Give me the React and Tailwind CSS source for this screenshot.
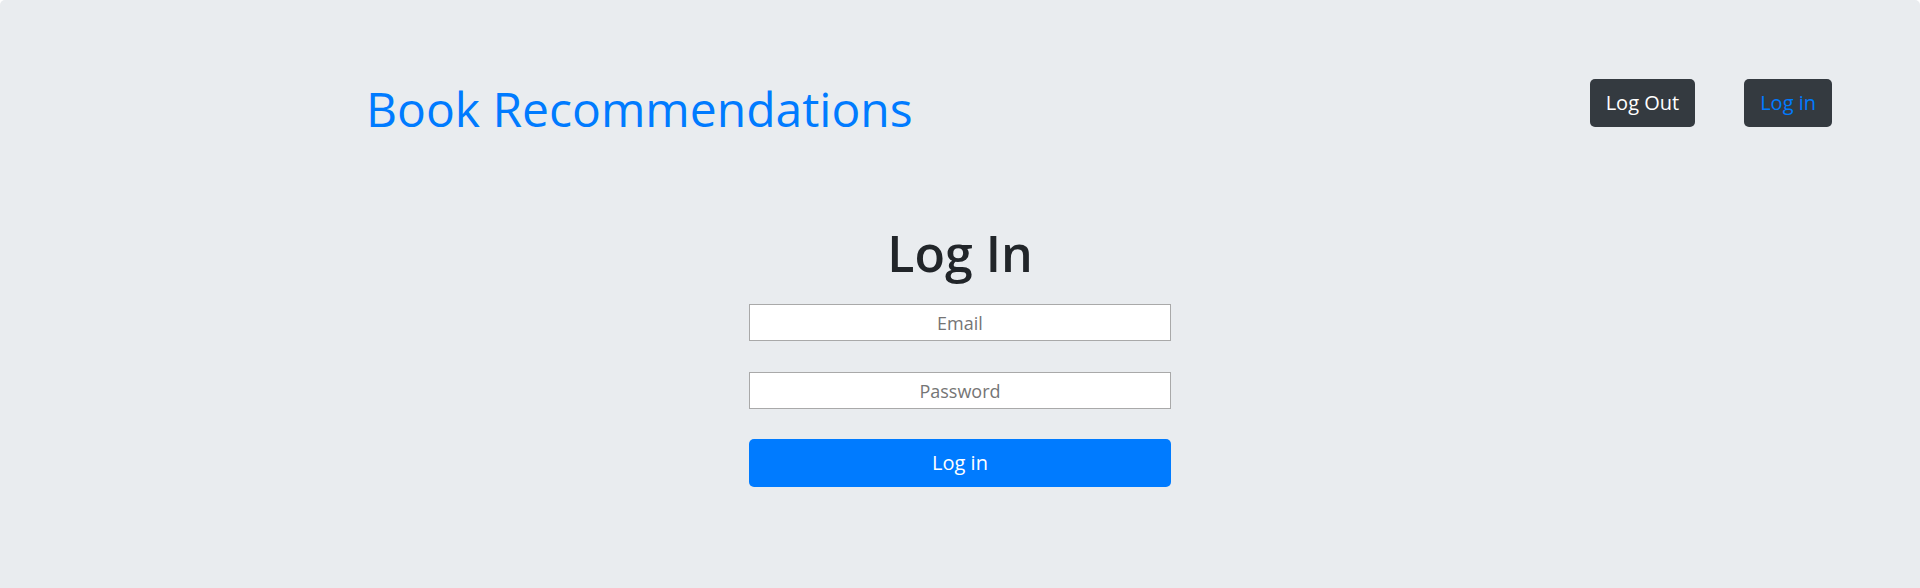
import React, { useState } from 'react';

const App = () => {
  const [email, setEmail] = useState('');
  const [password, setPassword] = useState('');

  const handleLogin = (e) => {
    e.preventDefault();
  };

  return (
    <div className="min-h-[588px] bg-[#e9ecef] rounded-t-[5px] font-['Open_Sans',sans-serif]">
      <header className="flex items-start justify-between pl-[366px] pr-[88px] pt-[79px]">
        <h1 className="text-[48px] leading-[60px] font-medium text-[#007bff] whitespace-nowrap">
          Book Recommendations
        </h1>
        <div className="flex gap-[49px]">
          <button className="h-12 px-4 rounded-[5px] bg-[#343a40] text-white text-[20px] leading-[30px]">
            Log Out
          </button>
          <button className="h-12 px-4 rounded-[5px] bg-[#343a40] text-[#007bff] text-[20px] leading-[30px]">
            Log in
          </button>
        </div>
      </header>

      <main className="flex flex-col items-center mt-[84px]">
        <h2 className="text-[50px] leading-[60px] font-semibold text-[#212529]">Log In</h2>
        <form onSubmit={handleLogin} className="flex flex-col w-[422px] mt-[21px]">
          <input
            type="email"
            placeholder="Email"
            value={email}
            onChange={(e) => setEmail(e.target.value)}
            className="h-[37px] w-full bg-white border border-[#a9a9a9] text-center text-[18px] text-[#212529] placeholder:text-[#757575] outline-none"
          />
          <input
            type="password"
            placeholder="Password"
            value={password}
            onChange={(e) => setPassword(e.target.value)}
            className="h-[37px] w-full mt-[31px] bg-white border border-[#a9a9a9] text-center text-[18px] text-[#212529] placeholder:text-[#757575] outline-none"
          />
          <button
            type="submit"
            className="h-12 w-full mt-[30px] rounded-[5px] bg-[#007bff] text-white text-[20px] leading-[30px]"
          >
            Log in
          </button>
        </form>
      </main>
    </div>
  );
};

export default App;
